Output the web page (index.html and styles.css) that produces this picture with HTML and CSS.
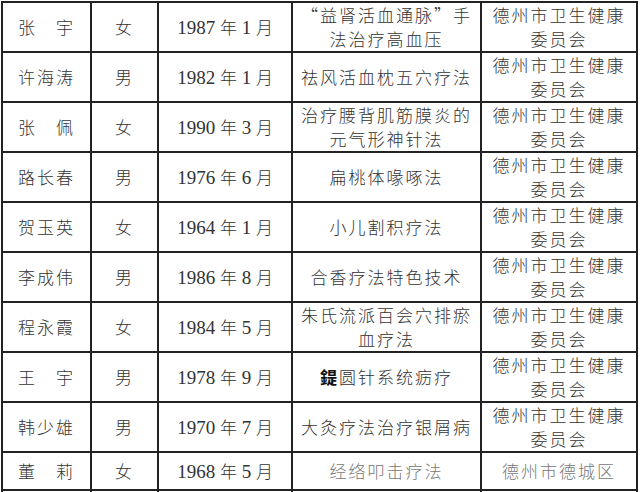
FILE: index.html
```html
<!DOCTYPE html>
<html lang="zh">
<head>
<meta charset="utf-8">
<link rel="stylesheet" href="styles.css">
</head>
<body>
<table class="list">
  <colgroup>
    <col class="c-name"><col class="c-sex"><col class="c-date"><col class="c-tech"><col class="c-org">
  </colgroup>
  <tbody>
    <tr class="r50">
      <td>张　宇</td><td>女</td>
      <td class="date">1987 <span class="cj">年</span> 1 <span class="cj">月</span></td>
      <td class="tech">“益肾活血通脉”手<br>法治疗高血压</td>
      <td>德州市卫生健康<br>委员会</td>
    </tr>
    <tr class="r50">
      <td>许海涛</td><td>男</td>
      <td class="date">1982 <span class="cj">年</span> 1 <span class="cj">月</span></td>
      <td class="tech">祛风活血枕五穴疗法</td>
      <td>德州市卫生健康<br>委员会</td>
    </tr>
    <tr class="r50">
      <td>张　佩</td><td>女</td>
      <td class="date">1990 <span class="cj">年</span> 3 <span class="cj">月</span></td>
      <td class="tech">治疗腰背肌筋膜炎的<br>元气形神针法</td>
      <td>德州市卫生健康<br>委员会</td>
    </tr>
    <tr class="r50">
      <td>路长春</td><td>男</td>
      <td class="date">1976 <span class="cj">年</span> 6 <span class="cj">月</span></td>
      <td class="tech">扁桃体喙啄法</td>
      <td>德州市卫生健康<br>委员会</td>
    </tr>
    <tr class="r50">
      <td>贺玉英</td><td>女</td>
      <td class="date">1964 <span class="cj">年</span> 1 <span class="cj">月</span></td>
      <td class="tech">小儿割积疗法</td>
      <td>德州市卫生健康<br>委员会</td>
    </tr>
    <tr class="r50">
      <td>李成伟</td><td>男</td>
      <td class="date">1986 <span class="cj">年</span> 8 <span class="cj">月</span></td>
      <td class="tech">合香疗法特色技术</td>
      <td>德州市卫生健康<br>委员会</td>
    </tr>
    <tr class="r50">
      <td>程永霞</td><td>女</td>
      <td class="date">1984 <span class="cj">年</span> 5 <span class="cj">月</span></td>
      <td class="tech">朱氏流派百会穴排瘀<br>血疗法</td>
      <td>德州市卫生健康<br>委员会</td>
    </tr>
    <tr class="r49">
      <td>王　宇</td><td>男</td>
      <td class="date">1978 <span class="cj">年</span> 9 <span class="cj">月</span></td>
      <td class="tech"><span class="bold">鍉</span>圆针系统疬疗</td>
      <td>德州市卫生健康<br>委员会</td>
    </tr>
    <tr class="r50">
      <td>韩少雄</td><td>男</td>
      <td class="date">1970 <span class="cj">年</span> 7 <span class="cj">月</span></td>
      <td class="tech">大灸疗法治疗银屑病</td>
      <td>德州市卫生健康<br>委员会</td>
    </tr>
    <tr class="r38 last">
      <td>董　莉</td><td>女</td>
      <td class="date">1968 <span class="cj">年</span> 5 <span class="cj">月</span></td>
      <td class="tech faded">经络叩击疗法</td>
      <td class="faded wm">德州市德城区</td>
    </tr>
    <tr class="r20">
      <td></td><td></td><td></td><td></td><td></td>
    </tr>
  </tbody>
</table>
</body>
</html>
```
FILE: styles.css
```css
html, body {
  margin: 0;
  padding: 0;
  background: #ffffff;
  overflow: hidden;
}
body {
  width: 640px;
  height: 492px;
}
.list {
  border-collapse: collapse;
  table-layout: fixed;
  width: 636px;
  margin: 1px 0 0 1px;
  font-family: "Noto Sans CJK SC", sans-serif;
  font-weight: 300;
  font-size: 17px;
  letter-spacing: 2px;
  color: #333;
}
.c-name { width: 89px; }
.c-sex { width: 67px; }
.c-date { width: 134px; }
.c-tech { width: 189px; }
.c-org { width: 156px; }
.list td {
  border: 2px solid #222;
  padding: 0;
  text-align: center;
  vertical-align: middle;
  line-height: 24px;
  white-space: nowrap;
  overflow: hidden;
}
.r50 { height: 50px; }
.r49 { height: 49px; }
.r38 { height: 38px; }
.r20 { height: 20px; }
.list td.date {
  font-family: "Liberation Serif", "Noto Sans CJK SC", serif;
  font-size: 19px;
  letter-spacing: 0;
}
.cj {
  font-family: "Noto Sans CJK SC", sans-serif;
  font-size: 17px;
}
.bold {
  font-weight: 700;
  color: #111;
}
.faded {
  color: #777;
}
.list td.wm {
  border-left-color: #999;
}
```
